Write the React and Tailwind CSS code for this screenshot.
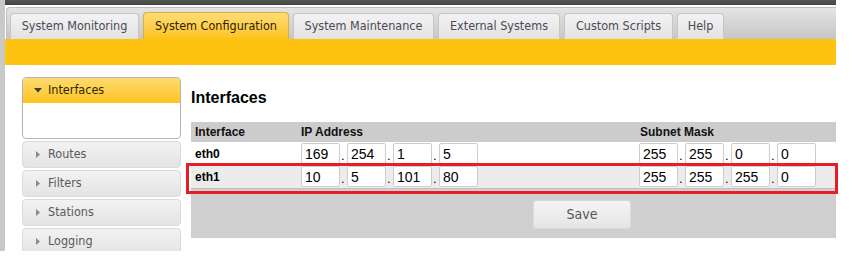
import React from "react";

const tabs = [
  { label: "System Monitoring", w: "w-[129px]" },
  { label: "System Configuration", w: "w-[146px]", active: true },
  { label: "System Maintenance", w: "w-[141px]" },
  { label: "External Systems", w: "w-[122px]" },
  { label: "Custom Scripts", w: "w-[109px]" },
  { label: "Help", w: "w-[47px]" },
];

const side = ["Routes", "Filters", "Stations", "Logging"];

const rows = [
  { name: "eth0", ip: ["169", "254", "1", "5"], mask: ["255", "255", "0", "0"] },
  { name: "eth1", ip: ["10", "5", "101", "80"], mask: ["255", "255", "255", "0"], alt: true },
];

function Octets({ values }) {
  return (
    <div className="flex items-center">
      {values.map((v, i) => (
        <React.Fragment key={i}>
          {i > 0 && (
            <span className="w-[7px] self-end pb-[1px] pl-[1px] text-[13px] leading-[14px] text-black">.</span>
          )}
          <input
            readOnly
            value={v}
            className="box-border h-[21px] w-[39px] rounded-[2px] border border-[#cdcdcd] bg-white pl-[3px] text-[14px] leading-[19px] text-black outline-none"
          />
        </React.Fragment>
      ))}
    </div>
  );
}

export default function App() {
  return (
    <div className="relative h-[260px] w-[864px] overflow-hidden bg-white font-['Liberation_Sans',Arial,sans-serif]">
      <div className="flex h-[251px] w-[836px] overflow-hidden">
        <div className="w-[5px] shrink-0 bg-[#c9c9c9]" />
        <div className="flex min-w-0 flex-1 flex-col">
          <div className="h-[5px] shrink-0 bg-linear-to-b from-[#555555] to-[#444444]" />
          <div className="h-[2px] shrink-0 bg-white" />
          <div className="ml-[1px] flex h-[32px] shrink-0 items-end gap-[4px] rounded-tl-[4px] border-l border-t border-[#bdbdbd] bg-linear-to-b from-[#e4e4e4] to-[#c6c6c6] pl-[3px] font-[family-name:'DejaVu_Sans_Condensed','DejaVu_Sans',sans-serif] text-[12.5px]">
            {tabs.map((t) =>
              t.active ? (
                <div
                  key={t.label}
                  className={`${t.w} flex h-[27px] items-center justify-center rounded-t-[4px] border border-b-0 border-[#d8b040] bg-linear-to-b from-[#fedd72] to-[#fec311] text-[#2a2200]`}
                >
                  {t.label}
                </div>
              ) : (
                <div
                  key={t.label}
                  className={`${t.w} flex h-[26px] items-center justify-center rounded-t-[4px] border border-b-0 border-[#c6c6c6] bg-linear-to-b from-[#f3f3f3] to-[#e2e2e2] text-[#4a4a58]`}
                >
                  {t.label}
                </div>
              )
            )}
          </div>
          <div className="h-[26px] shrink-0 bg-[#fec311]" />
          <div className="flex min-h-0 flex-1">
            {/* Sidebar */}
            <div className="ml-[17px] flex w-[159px] shrink-0 flex-col gap-[2px] pt-[12px] font-[family-name:'DejaVu_Sans_Condensed','DejaVu_Sans',sans-serif] text-[12.5px]">
              <div className="h-[62px] shrink-0 overflow-hidden rounded-[4px] border border-[#b4b4b4] bg-white">
                <div className="flex h-[25px] items-center bg-linear-to-b from-[#fedb6a] to-[#fec311] pl-[11px] text-[#2e2600]">
                  <svg width="8" height="5" viewBox="0 0 8 5" className="mr-[6px]">
                    <path d="M0 0H8L4 4.5Z" fill="#3a3a3a" />
                  </svg>
                  Interfaces
                </div>
              </div>
              {side.map((s) => (
                <div
                  key={s}
                  className="flex h-[27px] shrink-0 items-center rounded-[4px] border border-[#dadada] bg-linear-to-b from-[#f2f2f2] to-[#e4e4e4] pl-[13px] text-[#5a5a5a]"
                >
                  <svg width="4" height="7" viewBox="0 0 4 7" className="mr-[8px]">
                    <path d="M0 0L4 3.5L0 7Z" fill="#8a8a8a" />
                  </svg>
                  {s}
                </div>
              ))}
            </div>
            {/* Main */}
            <div className="relative ml-[10px] min-w-0 flex-1 overflow-hidden pt-[24px]">
              <div className="h-[18px] text-[16px] font-bold leading-[18px] text-black">Interfaces</div>
              <div className="mt-[15px] w-[782px] text-[12px]">
                <div className="grid h-[20px] grid-cols-[110px_339px_1fr] items-center bg-[#cccccc] font-bold text-[#111]">
                  <div className="pl-[4px]">Interface</div>
                  <div>IP Address</div>
                  <div>Subnet Mask</div>
                </div>
                {rows.map((r) => (
                  <div
                    key={r.name}
                    className={`grid grid-cols-[110px_339px_1fr] items-center ${
                      r.alt ? "h-[24px] border-b border-[#bfbfbf] bg-[#ececec]" : "h-[23px] bg-white"
                    }`}
                  >
                    <div className="pl-[4px] font-bold text-black">{r.name}</div>
                    <Octets values={r.ip} />
                    <div className="-ml-[1px]">
                      <Octets values={r.mask} />
                    </div>
                  </div>
                ))}
                <div className="flex h-[49px] justify-center bg-[#d0cfcf] pt-[11px]">
                  <button className="h-[29px] w-[98px] rounded-[3px] border border-[#dadada] bg-linear-to-b from-[#f4f4f4] to-[#e5e5e5] font-[family-name:'DejaVu_Sans_Condensed','DejaVu_Sans',sans-serif] text-[14px] text-[#555]">
                    Save
                  </button>
                </div>
              </div>
            </div>
          </div>
        </div>
      </div>
      <div className="pointer-events-none absolute left-[186px] top-[163px] h-[31px] w-[652px] border-[3px] border-[#e81e27]" />
    </div>
  );
}
